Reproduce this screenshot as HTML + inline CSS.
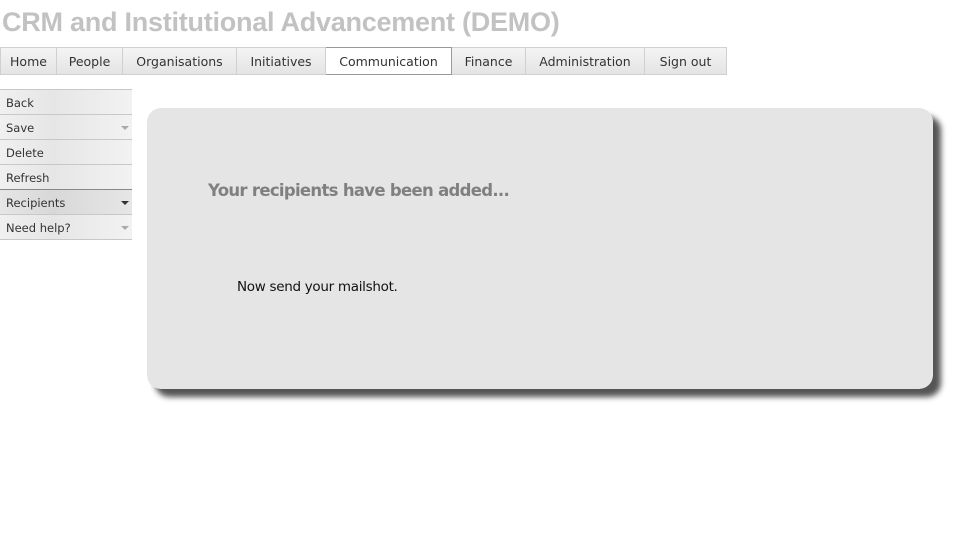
<!DOCTYPE html>
<html><head><style>
body{margin:0;width:954px;height:534px;background:#fff;font-family:"Liberation Sans",Arial,sans-serif;position:relative;overflow:hidden}
h1{position:absolute;left:2px;top:7px;margin:0;font-size:27px;font-weight:bold;color:#c2c2c2;letter-spacing:-0.25px;white-space:nowrap}
.nav{position:absolute;top:47px;left:0;height:28px;display:flex}
.nav div{height:26px;line-height:27px;border:1px solid #d0d0d0;border-left:none;background:linear-gradient(#f4f4f4,#e4e4e4);font-family:"DejaVu Sans",sans-serif;font-size:12.5px;color:#333;text-align:center;box-sizing:content-box}
.nav div:first-child{border-left:1px solid #d0d0d0}
.nav div.act{background:#fff;border-color:#999}
.side{position:absolute;left:0;top:89px;width:132px}
.side div{height:24px;border-top:1px solid #c8c8c8;background:linear-gradient(90deg,#f0f0f0,#e6e6e6 40%,#f2f2f2);font-family:"DejaVu Sans",sans-serif;font-size:11.5px;color:#333;line-height:27px;padding-left:6px;position:relative}
.side div.sel{border-top:1px solid #888;background:linear-gradient(90deg,#e6e6e6,#d8d8d8 40%,#e6e6e6)}
.side div.last{border-bottom:1px solid #c8c8c8}
.side span{position:absolute;right:3px;top:11px;width:0;height:0;border-left:4px solid transparent;border-right:4px solid transparent;border-top:4px solid #aaa}
.side .sel span{border-top-color:#333}
.panel{position:absolute;left:147px;top:108px;width:786px;height:281px;background:#e5e5e5;border-radius:14px;box-shadow:8px 8px 6px #555}
.panel h2{position:absolute;left:61px;top:73px;margin:0;font-family:"DejaVu Sans",sans-serif;font-size:16.5px;font-weight:bold;color:#808080;letter-spacing:-0.7px}
.panel p{position:absolute;left:90px;top:171px;margin:0;font-family:"DejaVu Sans",sans-serif;font-size:13.5px;color:#111;letter-spacing:-0.3px}
</style></head><body>
<h1>CRM and Institutional Advancement (DEMO)</h1>
<div class="nav">
<div style="width:55px">Home</div><div style="width:65px">People</div><div style="width:113px">Organisations</div><div style="width:88px">Initiatives</div><div class="act" style="width:125px">Communication</div><div style="width:73px">Finance</div><div style="width:118px">Administration</div><div style="width:81px">Sign out</div>
</div>
<div class="side">
<div>Back</div><div>Save<span></span></div><div>Delete</div><div>Refresh</div><div class="sel">Recipients<span></span></div><div class="last">Need help?<span></span></div>
</div>
<div class="panel"><h2>Your recipients have been added...</h2><p>Now send your mailshot.</p></div>
</body></html>
